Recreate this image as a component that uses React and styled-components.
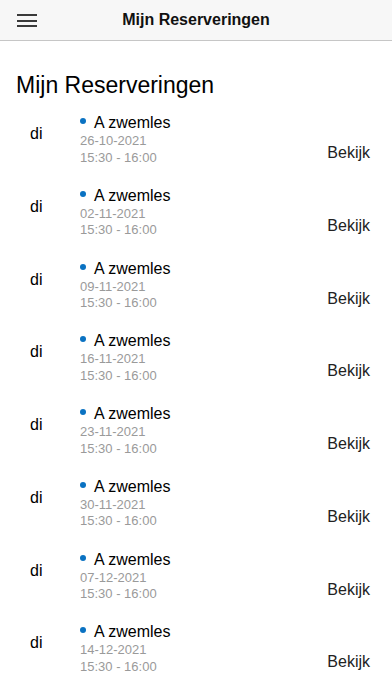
import React from 'react'
import styled, { createGlobalStyle } from 'styled-components'

const GlobalStyle = createGlobalStyle`
  html, body {
    margin: 0;
    padding: 0;
    background: #ffffff;
  }
  body {
    font-family: 'Liberation Sans', Arial, sans-serif;
    -webkit-font-smoothing: antialiased;
  }
`

const Screen = styled.div`
  height: 100vh;
  overflow: hidden;
  background: #ffffff;
`

const Header = styled.header`
  height: 40px;
  display: flex;
  align-items: center;
  justify-content: center;
  position: relative;
  background: #f7f7f7;
  border-bottom: 1px solid #c6c6c6;
`

const MenuButton = styled.button`
  position: absolute;
  left: 17px;
  top: 14px;
  width: 20px;
  height: 13px;
  padding: 0;
  border: 0;
  background: transparent;
  display: flex;
  flex-direction: column;
  justify-content: space-between;
`

const MenuLine = styled.span`
  display: block;
  height: 2px;
  width: 100%;
  background: #3a3a3a;
`

const HeaderTitle = styled.h1`
  margin: 0;
  font-size: 16px;
  font-weight: bold;
  color: #111111;
  line-height: 20px;
`

const PageTitle = styled.h2`
  margin: 30px 0 4px 16px;
  font-size: 23px;
  font-weight: normal;
  line-height: 28px;
  color: #000000;
`

const List = styled.div`
  display: flex;
  flex-direction: column;
`

const Row = styled.div`
  display: flex;
  align-items: flex-start;
  padding: 10px 22px 9.75px 30px;
`

const Day = styled.div`
  width: 50px;
  padding-top: 11px;
  font-size: 16px;
  line-height: 20px;
  color: #000000;
`

const Info = styled.div`
  flex: 1;
  display: flex;
  flex-direction: column;
`

const Name = styled.div`
  display: flex;
  align-items: flex-start;
  font-size: 16px;
  line-height: 20px;
  color: #000000;
`

const Dot = styled.span`
  width: 6px;
  height: 6px;
  margin: 5px 8px 0 0;
  border-radius: 50%;
  background: #0a72c2;
  flex-shrink: 0;
`

const Meta = styled.div`
  font-size: 13px;
  line-height: 16.5px;
  color: #9a9a9a;
`

const ViewLink = styled.a`
  padding-top: 30px;
  font-size: 16px;
  line-height: 20px;
  color: #222222;
  text-decoration: none;
`

const reservations = [
  '26-10-2021',
  '02-11-2021',
  '09-11-2021',
  '16-11-2021',
  '23-11-2021',
  '30-11-2021',
  '07-12-2021',
  '14-12-2021',
]

export default function App() {
  return (
    <Screen>
      <GlobalStyle />
      <Header>
        <MenuButton aria-label='menu'>
          <MenuLine />
          <MenuLine />
          <MenuLine />
        </MenuButton>
        <HeaderTitle>Mijn Reserveringen</HeaderTitle>
      </Header>
      <PageTitle>Mijn Reserveringen</PageTitle>
      <List>
        {reservations.map(date => (
          <Row key={date}>
            <Day>di</Day>
            <Info>
              <Name>
                <Dot />
                A zwemles
              </Name>
              <Meta>{date}</Meta>
              <Meta>15:30 - 16:00</Meta>
            </Info>
            <ViewLink href='#'>Bekijk</ViewLink>
          </Row>
        ))}
      </List>
    </Screen>
  )
}
